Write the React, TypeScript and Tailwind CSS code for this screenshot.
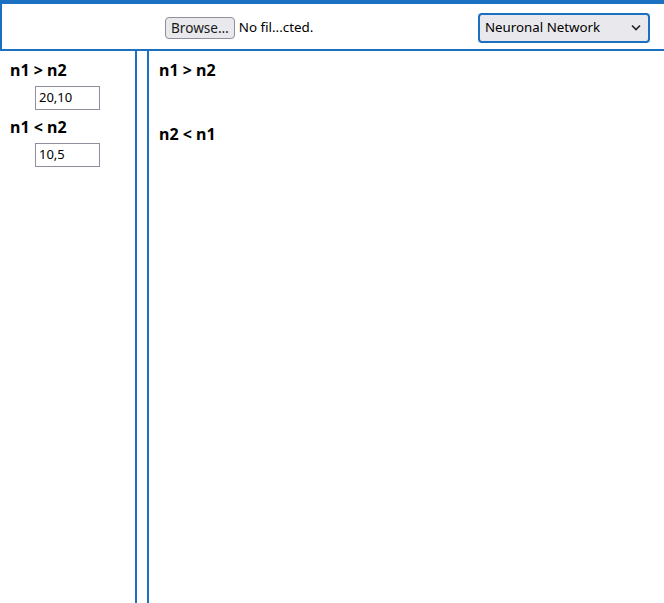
import React from 'react';

const font = { fontFamily: '"Noto Sans", "Open Sans", sans-serif' };

function Chevron() {
  return (
    <svg width="10" height="7" viewBox="0 0 10 7" className="text-[#222]">
      <path d="M1 1.5 L5 5.5 L9 1.5" fill="none" stroke="currentColor" strokeWidth="1.6" />
    </svg>
  );
}

export default function App() {
  return (
    <div className="flex h-[603px] w-[664px] flex-col overflow-hidden bg-white text-black" style={font}>
      {/* header */}
      <div className="flex h-[51px] shrink-0 items-center border-t-4 border-b-2 border-l-2 border-[#1b70c2] pl-[163px] pr-[14px]">
        <div className="mt-[2px] flex items-center">
          <div className="flex h-[22px] items-center rounded-[4px] border border-[#8f8f9d] bg-[#e9e9ed] px-[5px] text-[13.6px] leading-none text-[#1a1a1a]">
            Browse…
          </div>
          <span className="ml-[4px] text-[13.4px]">No fil...cted.</span>
        </div>
        <div className="ml-auto mt-[2px] flex h-[30px] w-[172px] items-center justify-between rounded-[4px] border-2 border-[#1b70c2] bg-[#e9e9ed] pl-[5px] pr-[7px] text-[13.3px] text-black">
          <span>Neuronal Network</span>
          <Chevron />
        </div>
      </div>

      {/* body */}
      <div className="flex min-h-0 flex-1">
        <div className="w-[137px] shrink-0 border-r-2 border-[#1b70c2] pl-[10px] pt-[8px]">
          <div className="text-[16px] font-bold leading-[22px]">n1 &gt; n2</div>
          <div className="mt-[5px] ml-[25px] flex h-[24px] w-[65px] items-center border border-[#8f8f9d] px-[3px] text-[13px]">
            20,10
          </div>
          <div className="mt-[6px] text-[16px] font-bold leading-[22px]">n1 &lt; n2</div>
          <div className="mt-[5px] ml-[25px] flex h-[24px] w-[65px] items-center border border-[#8f8f9d] px-[3px] text-[13px]">
            10,5
          </div>
        </div>
        <div className="ml-[10px] flex-1 border-l-2 border-[#1b70c2] pl-[10px] pt-[8px]">
          <div className="text-[16px] font-bold leading-[22px]">n1 &gt; n2</div>
          <div className="mt-[42px] text-[16px] font-bold leading-[22px]">n2 &lt; n1</div>
        </div>
      </div>
    </div>
  );
}
